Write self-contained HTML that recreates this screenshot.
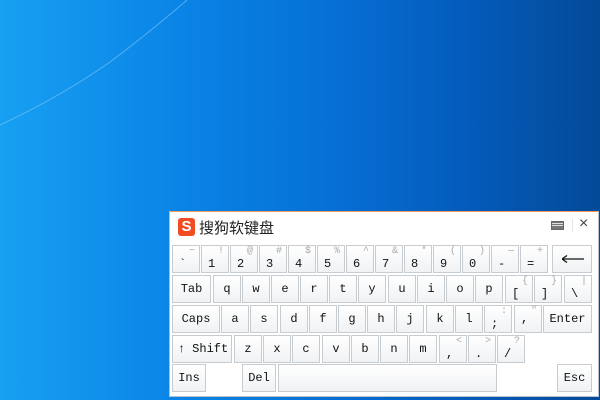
<!DOCTYPE html>
<html><head><meta charset="utf-8"><style>
*{margin:0;padding:0;box-sizing:border-box}
body{width:600px;height:400px;overflow:hidden;position:relative;background:linear-gradient(90deg,#17a0f2 0%,#0a84e6 30%,#0670d6 55%,#0459b8 80%,#034a98 100%);font-family:"Liberation Mono",monospace}
#p{position:absolute;left:169px;top:211px;width:430px;height:186px;background:#fff;border:1px solid #b9c2cb;border-top-color:#f29a5c;border-left-color:#e8b08a}
.k{position:absolute;height:28px;border:1px solid #c7ccd1;background:linear-gradient(#fff,#f0f2f4);font-size:12px;color:#111}
.m{position:absolute;left:6px;top:11px}
.s{position:absolute;right:4px;top:0px;font-size:10px;color:#aaa}
.c{position:absolute;left:0;right:0;top:6px;text-align:center}
</style></head><body>
<svg style="position:absolute;left:0;top:0" width="600" height="400"><path d="M187 0 Q150 32 110 62 Q60 97 0 125" fill="none" stroke="rgba(170,220,255,.45)" stroke-width="1"/></svg>
<div id="p"></div>
<div style="position:absolute;left:178px;top:218px;width:17px;height:18px;background:#f04d22;border-radius:3px;color:#fff;font:bold 15px 'Liberation Sans',sans-serif;text-align:center;line-height:18px">S</div>
<div style="position:absolute;left:199px;top:217px;font:15px 'Liberation Sans','Noto Sans CJK SC',sans-serif;color:#222">搜狗软键盘</div>
<div style="position:absolute;left:551px;top:221px;width:13px;height:9px;background:#777;border:1px solid #666"></div>
<div style="position:absolute;left:552px;top:223px;width:11px;height:1px;background:#ddd"></div>
<div style="position:absolute;left:552px;top:225px;width:11px;height:1px;background:#ddd"></div>
<div style="position:absolute;left:572px;top:219px;width:1px;height:13px;background:#e4e4e4"></div>
<div style="position:absolute;left:579px;top:215px;font:16px 'Liberation Sans',sans-serif;color:#444">×</div>

<div class="k" style="left:172px;top:245px;width:28px"><span class="m">`</span><span class="s">~</span></div>
<div class="k" style="left:201px;top:245px;width:28px"><span class="m">1</span><span class="s">!</span></div>
<div class="k" style="left:230px;top:245px;width:28px"><span class="m">2</span><span class="s">@</span></div>
<div class="k" style="left:259px;top:245px;width:28px"><span class="m">3</span><span class="s">#</span></div>
<div class="k" style="left:288px;top:245px;width:28px"><span class="m">4</span><span class="s">$</span></div>
<div class="k" style="left:317px;top:245px;width:28px"><span class="m">5</span><span class="s">%</span></div>
<div class="k" style="left:346px;top:245px;width:28px"><span class="m">6</span><span class="s">^</span></div>
<div class="k" style="left:375px;top:245px;width:28px"><span class="m">7</span><span class="s">&amp;</span></div>
<div class="k" style="left:404px;top:245px;width:28px"><span class="m">8</span><span class="s">*</span></div>
<div class="k" style="left:433px;top:245px;width:28px"><span class="m">9</span><span class="s">(</span></div>
<div class="k" style="left:462px;top:245px;width:28px"><span class="m">0</span><span class="s">)</span></div>
<div class="k" style="left:491px;top:245px;width:28px"><span class="m">-</span><span class="s">—</span></div>
<div class="k" style="left:520px;top:245px;width:28px"><span class="m">=</span><span class="s">+</span></div>
<div class="k" style="left:552px;top:245px;width:40px"><svg style="position:absolute;left:9px;top:9px" width="22" height="8"><path d="M0 4 H22 M0 4 L5 0.5 M0 4 L5 7.5" stroke="#111" stroke-width="1.3" fill="none"/></svg></div>

<div class="k" style="left:172px;top:275px;width:39px"><span class="c">Tab</span></div>
<div class="k" style="left:213px;top:275px;width:28px"><span class="c">q</span></div>
<div class="k" style="left:242px;top:275px;width:28px"><span class="c">w</span></div>
<div class="k" style="left:271px;top:275px;width:28px"><span class="c">e</span></div>
<div class="k" style="left:300px;top:275px;width:28px"><span class="c">r</span></div>
<div class="k" style="left:329px;top:275px;width:28px"><span class="c">t</span></div>
<div class="k" style="left:358px;top:275px;width:28px"><span class="c">y</span></div>
<div class="k" style="left:388px;top:275px;width:28px"><span class="c">u</span></div>
<div class="k" style="left:417px;top:275px;width:28px"><span class="c">i</span></div>
<div class="k" style="left:446px;top:275px;width:28px"><span class="c">o</span></div>
<div class="k" style="left:475px;top:275px;width:28px"><span class="c">p</span></div>
<div class="k" style="left:505px;top:275px;width:28px"><span class="m">[</span><span class="s">{</span></div>
<div class="k" style="left:534px;top:275px;width:28px"><span class="m">]</span><span class="s">}</span></div>
<div class="k" style="left:564px;top:275px;width:28px"><span class="m">\</span><span class="s">|</span></div>

<div class="k" style="left:172px;top:305px;width:48px"><span class="c">Caps</span></div>
<div class="k" style="left:221px;top:305px;width:28px"><span class="c">a</span></div>
<div class="k" style="left:250px;top:305px;width:28px"><span class="c">s</span></div>
<div class="k" style="left:280px;top:305px;width:28px"><span class="c">d</span></div>
<div class="k" style="left:309px;top:305px;width:28px"><span class="c">f</span></div>
<div class="k" style="left:338px;top:305px;width:28px"><span class="c">g</span></div>
<div class="k" style="left:367px;top:305px;width:28px"><span class="c">h</span></div>
<div class="k" style="left:396px;top:305px;width:28px"><span class="c">j</span></div>
<div class="k" style="left:426px;top:305px;width:28px"><span class="c">k</span></div>
<div class="k" style="left:455px;top:305px;width:28px"><span class="c">l</span></div>
<div class="k" style="left:484px;top:305px;width:28px"><span class="m">;</span><span class="s">:</span></div>
<div class="k" style="left:514px;top:305px;width:28px"><span class="m" style="top:6px">,</span><span class="s">"</span></div>
<div class="k" style="left:543px;top:305px;width:49px"><span class="c">Enter</span></div>

<div class="k" style="left:172px;top:335px;width:60px"><span class="c" style="left:2px">&#x2191;&nbsp;Shift</span></div>
<div class="k" style="left:234px;top:335px;width:28px"><span class="c">z</span></div>
<div class="k" style="left:263px;top:335px;width:28px"><span class="c">x</span></div>
<div class="k" style="left:292px;top:335px;width:28px"><span class="c">c</span></div>
<div class="k" style="left:322px;top:335px;width:28px"><span class="c">v</span></div>
<div class="k" style="left:351px;top:335px;width:28px"><span class="c">b</span></div>
<div class="k" style="left:380px;top:335px;width:28px"><span class="c">n</span></div>
<div class="k" style="left:409px;top:335px;width:28px"><span class="c">m</span></div>
<div class="k" style="left:439px;top:335px;width:28px"><span class="m">,</span><span class="s">&lt;</span></div>
<div class="k" style="left:468px;top:335px;width:28px"><span class="m">.</span><span class="s">&gt;</span></div>
<div class="k" style="left:497px;top:335px;width:28px"><span class="m">/</span><span class="s">?</span></div>

<div class="k" style="left:172px;top:364px;width:34px"><span class="c">Ins</span></div>
<div class="k" style="left:242px;top:364px;width:34px"><span class="c">Del</span></div>
<div class="k" style="left:278px;top:364px;width:219px"></div>
<div class="k" style="left:557px;top:364px;width:35px"><span class="c">Esc</span></div>
</body></html>
